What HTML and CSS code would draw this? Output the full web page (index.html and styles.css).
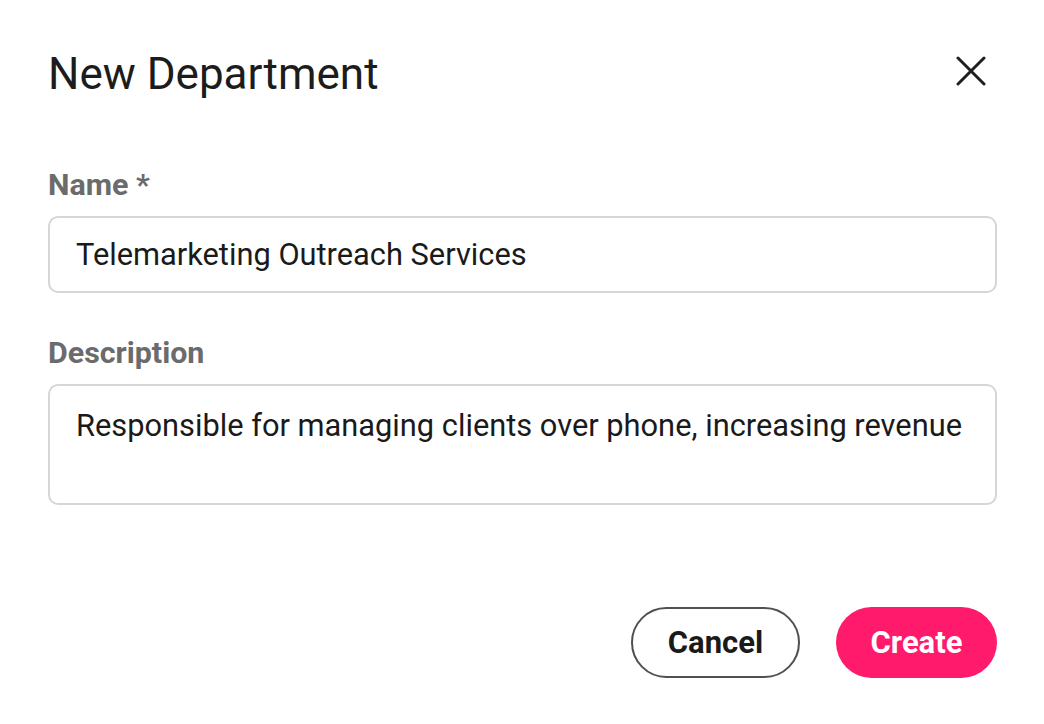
FILE: index.html
```html
<!DOCTYPE html>
<html>
<head>
<meta charset="utf-8">
<link rel="stylesheet" href="styles.css">
</head>
<body>
<div class="dialog">
  <div class="header">
    <h1 class="title">New Department</h1>
    <button class="close" aria-label="Close">
      <svg width="30" height="30" viewBox="0 0 30 30"><path d="M2 2 L28 28 M28 2 L2 28" stroke="#1f1f1f" stroke-width="3" stroke-linecap="round" fill="none"/></svg>
    </button>
  </div>
  <div class="field field-name">
    <label class="label">Name *</label>
    <div class="input">Telemarketing Outreach Services</div>
  </div>
  <div class="field field-desc">
    <label class="label">Description</label>
    <div class="input textarea">Responsible for managing clients over phone, increasing revenue</div>
  </div>
  <div class="actions">
    <button class="btn btn-outline">Cancel</button>
    <button class="btn btn-primary">Create</button>
  </div>
</div>
</body>
</html>
```
FILE: styles.css
```css
html, body {
  margin: 0;
  padding: 0;
  background: #ffffff;
}
body {
  font-family: Roboto, "Liberation Sans", sans-serif;
  color: #1a1a1a;
}
.dialog {
  width: 1044px;
  height: 724px;
  box-sizing: border-box;
  padding: 48px 47px 0 48px;
  display: flex;
  flex-direction: column;
}
.header {
  display: flex;
  justify-content: space-between;
  align-items: flex-start;
  height: 56px;
}
.title {
  margin: 0;
  font-size: 44px;
  line-height: 52px;
  font-weight: 400;
  color: #1c1c1c;
}
.close {
  border: 0;
  background: transparent;
  padding: 0;
  margin-top: 8px;
  margin-right: 11px;
  display: flex;
  width: 30px;
  height: 30px;
}
.field {
  display: flex;
  flex-direction: column;
}
.field-name { margin-top: 64px; }
.field-desc { margin-top: 43px; }
.label {
  font-size: 30.4px;
  font-weight: 700;
  color: #6b6b6b;
  line-height: 34px;
  margin-bottom: 14px;
}
.input {
  border: 2px solid #d6d6d6;
  border-radius: 10px;
  height: 77px;
  box-sizing: border-box;
  padding: 0 26px;
  display: flex;
  align-items: center;
  font-size: 30.8px;
  color: #1a1a1a;
}
.textarea {
  height: 121px;
  align-items: flex-start;
  padding-top: 22px;
  line-height: 36px;
}
.actions {
  display: flex;
  justify-content: flex-end;
  gap: 36px;
  margin-top: 102px;
}
.btn {
  height: 71px;
  border-radius: 36px;
  font-family: Roboto, "Liberation Sans", sans-serif;
  font-size: 31px;
  font-weight: 700;
  box-sizing: border-box;
  padding: 0;
}
.btn-outline {
  width: 169px;
  background: #fff;
  border: 2px solid #505050;
  color: #1a1a1a;
}
.btn-primary {
  width: 161px;
  background: #ff1a6c;
  border: 0;
  color: #fff;
}
```
